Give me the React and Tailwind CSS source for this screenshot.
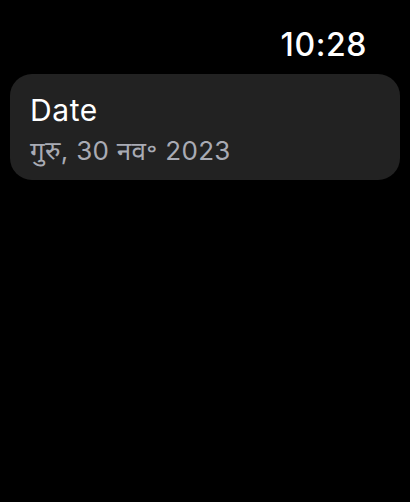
export default function App() {
  return (
    <div
      className="w-[410px] h-[502px] bg-black text-white overflow-hidden"
      style={{ fontFamily: 'Inter, "Noto Sans", "Noto Sans Devanagari", sans-serif' }}
    >
      <div className="flex justify-end pr-[43px] pt-[26px] h-[74px]">
        <span className="text-[32px] font-medium leading-[38px] tracking-[0.6px]">10:28</span>
      </div>
      <div className="mx-[10px] h-[106px] rounded-[22px] bg-[#222222] px-[20px] pt-[17px]">
        <div className="text-[30px] leading-[38px] tracking-[0.6px] text-white">Date</div>
        <div className="text-[26px] leading-[34px] mt-[5px] tracking-[0.3px] text-[#a9abb4]">गुरु, 30 नव॰ 2023</div>
      </div>
    </div>
  );
}
